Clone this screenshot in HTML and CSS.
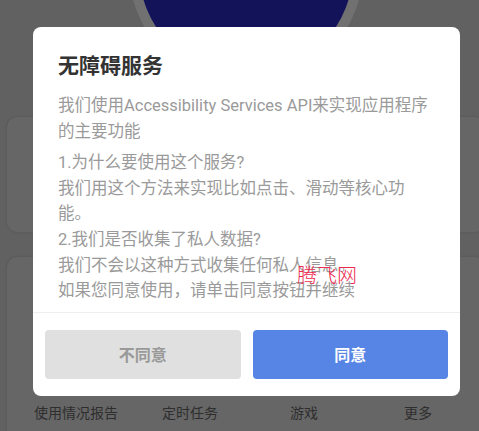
FILE: index.html
```html
<!DOCTYPE html>
<html lang="zh-CN">
<head>
   <meta charset="UTF-8">
   <meta name="viewport" content="width=device-width, initial-scale=1.0">
   <title>无障碍服务</title>
   <link rel="stylesheet" href="styles.css">
</head>
<body>
   <div class="page">
      <header class="hero">
         <div class="hero-circle"></div>
      </header>
      <section class="card card-status"></section>
      <section class="card card-tools">
         <nav class="tool-row">
            <span class="tool">使用情况报告</span>
            <span class="tool">定时任务</span>
            <span class="tool">游戏</span>
            <span class="tool">更多</span>
         </nav>
      </section>
   </div>

   <div class="dialog">
      <h2 class="dialog-title">无障碍服务</h2>
      <div class="dialog-body">
         <p class="intro">我们使用Accessibility Services API来实现应用程序的主要功能</p>
         <p>1.为什么要使用这个服务?</p>
         <p>我们用这个方法来实现比如点击、滑动等核心功能。</p>
         <p>2.我们是否收集了私人数据?</p>
         <p>我们不会以这种方式收集任何私人信息。</p>
         <p>如果您同意使用，请单击同意按钮并继续</p>
      </div>
      <div class="dialog-actions">
         <button class="btn btn-cancel">不同意</button>
         <button class="btn btn-ok">同意</button>
      </div>
   </div>

   <span class="watermark">腾飞网</span>
</body>
</html>
```

FILE: styles.css
```css
* {
   box-sizing: border-box;
   font-family: Roboto, "Noto Sans CJK SC", sans-serif;
}
html, body {
   margin: 0;
   padding: 0;
}
body {
   width: 479px;
   height: 431px;
   overflow: hidden;
   background: #616161;
}
.page {
   width: 492px;
}
.hero {
   height: 110px;
   overflow: hidden;
}
.hero-circle {
   width: 234px;
   height: 234px;
   margin: -148px auto 0;
   border-radius: 50%;
   background: #13135a;
   border: 10px solid #717171;
}
.card {
   margin: 7px 7px 0;
   background: #666;
   border-radius: 10px;
   box-shadow: 0 0 3px rgba(0, 0, 0, 0.15);
}
.card-status {
   height: 115px;
}
.card-tools {
   margin-top: 25px;
   height: 190px;
   padding: 146px 0 0 12px;
}
.tool-row {
   display: grid;
   grid-template-columns: repeat(4, 114px);
}
.tool {
   text-align: center;
   font-size: 14px;
   line-height: 20px;
   color: #2e2e2e;
}

/* modal */
.dialog {
   position: absolute;
   left: 33px;
   top: 27px;
   width: 427px;
   background: #fff;
   border-radius: 8px;
}
.dialog-title {
   margin: 0;
   padding: 25px 25px 0;
   font-size: 21px;
   line-height: 28px;
   font-weight: bold;
   color: #333;
}
.dialog-body {
   padding: 13px 25px 8px;
   border-bottom: 1px solid #eee;
}
.dialog-body p {
   margin: 0;
   font-size: 16.5px;
   line-height: 25.6px;
   color: #9a9a9a;
}
.dialog-body .intro {
   margin-bottom: 6px;
}
.dialog-actions {
   display: flex;
   gap: 12px;
   padding: 17px 12px;
}
.btn {
   flex: 1;
   height: 49px;
   border: none;
   border-radius: 4px;
   font-size: 16px;
   font-weight: bold;
}
.btn-cancel {
   background: #e0e0e0;
   color: #999;
}
.btn-ok {
   background: #5785e5;
   color: #fff;
}
.watermark {
   position: absolute;
   left: 297px;
   top: 265px;
   font-size: 20px;
   line-height: 22px;
   font-weight: 300;
   color: #ee2a4f;
}
```
